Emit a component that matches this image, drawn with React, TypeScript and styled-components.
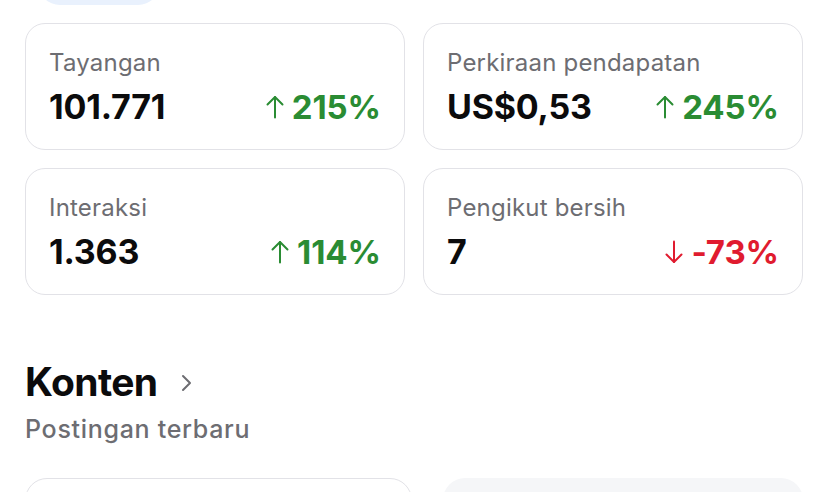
import React from "react";
import styled, { createGlobalStyle } from "styled-components";

const Global = createGlobalStyle`
  html, body { margin: 0; padding: 0; background: #ffffff; }
  body { font-family: Inter, "Noto Sans", sans-serif; -webkit-font-smoothing: antialiased; overflow: hidden; }
`;

const Page = styled.div`
  width: 828px;
  height: 492px;
  overflow: hidden;
  padding: 0 25px;
  box-sizing: border-box;
  display: flex;
  flex-direction: column;
  & > * { flex-shrink: 0; }
`;

const Pill = styled.div`
  margin: -39px 0 0 13px;
  width: 122px;
  height: 44px;
  border-radius: 22px;
  background: #e9f1fd;
`;

const Grid = styled.div`
  margin-top: 18px;
  display: grid;
  grid-template-columns: 380px 380px;
  gap: 18px;
`;

const Card = styled.div`
  height: 127px;
  box-sizing: border-box;
  border: 1.5px solid #e2e2e7;
  border-radius: 20px;
  padding: 24px 23px 0 23px;
  display: flex;
  flex-direction: column;
`;

const Label = styled.div`
  font-size: 24px;
  line-height: 30px;
  color: #6d6d72;
  letter-spacing: 0.2px;
`;

const Row = styled.div`
  margin-top: 9px;
  display: flex;
  align-items: center;
  justify-content: space-between;
`;

const Value = styled.div`
  font-size: 34px;
  line-height: 40px;
  font-weight: 700;
  color: #0b0b0c;
  letter-spacing: -0.2px;
`;

const Change = styled.div<{ $up: boolean }>`
  display: flex;
  align-items: center;
  gap: 7px;
  font-size: 33px;
  line-height: 40px;
  font-weight: 700;
  letter-spacing: -0.1px;
  color: ${(p) => (p.$up ? "#2a8c33" : "#e01b2f")};
`;

const Arrow = styled.svg`
  width: 20px;
  height: 24px;
  flex: none;
`;

const SectionHead = styled.div`
  margin-top: 65px;
  display: flex;
  align-items: center;
  gap: 22px;
`;

const Title = styled.h2`
  margin: 0;
  font-size: 39px;
  line-height: 44px;
  font-weight: 700;
  color: #0b0b0c;
  letter-spacing: -0.6px;
`;

const Chevron = styled.svg`
  width: 12px;
  height: 20px;
  margin-top: 2px;
`;

const Sub = styled.div`
  margin-top: 10px;
  font-size: 25px;
  line-height: 30px;
  font-weight: 500;
  color: #6d6d72;
  letter-spacing: 0.7px;
`;

const PostRow = styled.div`
  margin-top: 34px;
  display: grid;
  grid-template-columns: 387px 360px;
  gap: 31px;
`;

const PostCard = styled.div<{ $filled?: boolean }>`
  height: 80px;
  border-radius: 22px;
  box-sizing: border-box;
  border: ${(p) => (p.$filled ? "none" : "1.5px solid #e2e2e7")};
  background: ${(p) => (p.$filled ? "#f5f6f8" : "#ffffff")};
`;

const UpArrow = () => (
  <Arrow viewBox="0 0 20 24" fill="none" stroke="currentColor" strokeWidth="2" strokeLinecap="round" strokeLinejoin="round">
    <path d="M10 22.5V2" />
    <path d="M2.5 9.5L10 2l7.5 7.5" />
  </Arrow>
);

const DownArrow = () => (
  <Arrow viewBox="0 0 20 24" fill="none" stroke="currentColor" strokeWidth="2" strokeLinecap="round" strokeLinejoin="round">
    <path d="M10 1.5V22" />
    <path d="M2.5 14.5L10 22l7.5-7.5" />
  </Arrow>
);

type Stat = { label: string; value: string; change: string; up: boolean };

const stats: Stat[] = [
  { label: "Tayangan", value: "101.771", change: "215%", up: true },
  { label: "Perkiraan pendapatan", value: "US$0,53", change: "245%", up: true },
  { label: "Interaksi", value: "1.363", change: "114%", up: true },
  { label: "Pengikut bersih", value: "7", change: "-73%", up: false },
];

export default function App() {
  return (
    <>
      <Global />
      <Page>
        <Pill />
        <Grid>
          {stats.map((s) => (
            <Card key={s.label}>
              <Label>{s.label}</Label>
              <Row>
                <Value>{s.value}</Value>
                <Change $up={s.up}>
                  {s.up ? <UpArrow /> : <DownArrow />}
                  {s.change}
                </Change>
              </Row>
            </Card>
          ))}
        </Grid>
        <SectionHead>
          <Title>Konten</Title>
          <Chevron viewBox="0 0 12 20" fill="none" stroke="#6d6d72" strokeWidth="2" strokeLinecap="round" strokeLinejoin="round">
            <path d="M3 3l7 7-7 7" />
          </Chevron>
        </SectionHead>
        <Sub>Postingan terbaru</Sub>
        <PostRow>
          <PostCard />
          <PostCard $filled />
        </PostRow>
      </Page>
    </>
  );
}
